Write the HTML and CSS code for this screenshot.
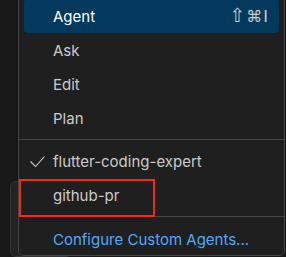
FILE: index.html
```html
<!DOCTYPE html>
<html lang="en">
<head>
    <meta charset="UTF-8">
    <meta name="viewport" content="width=device-width, initial-scale=1.0">
    <title>Agent Picker</title>
    <link rel="stylesheet" href="styles.css">
</head>
<body>
    <div class="backdrop-panel"></div>

    <div class="menu">
        <div class="item selected">
            <span class="icon"></span>
            <span class="label">Agent</span>
            <span class="keys"><span class="shift">⇧</span>⌘I</span>
        </div>
        <div class="item">
            <span class="icon"></span>
            <span class="label">Ask</span>
        </div>
        <div class="item">
            <span class="icon"></span>
            <span class="label">Edit</span>
        </div>
        <div class="item">
            <span class="icon"></span>
            <span class="label">Plan</span>
        </div>

        <div class="separator"></div>

        <div class="item">
            <span class="icon">
                <svg width="16" height="16" viewBox="0 0 16 16">
                    <path d="M1.5 8.5 L6.5 13.5 L15.5 3.5" fill="none" stroke="#cccccc" stroke-width="1.1"/>
                </svg>
            </span>
            <span class="label">flutter-coding-expert</span>
        </div>
        <div class="item">
            <span class="icon"></span>
            <span class="label">github-pr</span>
        </div>

        <div class="separator"></div>

        <div class="item last">
            <span class="icon"></span>
            <span class="label link">Configure Custom Agents...</span>
        </div>
    </div>

    <!-- annotation drawn over the screenshot -->
    <div class="highlight-box"></div>
</body>
</html>
```

FILE: styles.css
```css
body {
    margin: 0;
    padding: 0;
    background: #181818;
    font-family: Inter, "Noto Sans", sans-serif;
    font-size: 15px;
    color: #cccccc;
    overflow: hidden;
    position: relative;
    height: 257px;
}

.backdrop-panel {
    position: absolute;
    left: 10px;
    top: 181px;
    width: 60px;
    height: 74px;
    background: #232323;
    border: 1px solid #363636;
    border-radius: 6px;
}

.menu {
    position: relative;
    margin: -6px 0 0 18px;
    width: 255px;
    padding: 4px 5px 0 5px;
    background: #1f1f1f;
    border: 1px solid #454545;
    border-radius: 6px;
}

.item {
    display: flex;
    align-items: center;
    height: 34px;
    padding: 0 10px 0 5px;
    border-radius: 4px;
}

.item.last {
    height: 31px;
    padding-top: 3px;
}

.item.selected {
    background: #04395e;
    color: #ffffff;
}

.icon {
    width: 16px;
    height: 16px;
    margin-right: 8px;
    display: flex;
    align-items: center;
    justify-content: center;
}

.label {
    flex: 1;
}

.link {
    color: #4daafc;
}

.keys {
    font-family: "DejaVu Sans", sans-serif;
    font-size: 16px;
    color: #cccccc;
    letter-spacing: 1px;
}

.shift {
    font-size: 19px;
    line-height: 16px;
}

.separator {
    height: 1px;
    background: #454545;
    margin: 4px -5px 4px -5px;
}

.highlight-box {
    position: absolute;
    left: 19px;
    top: 179px;
    width: 132px;
    height: 34px;
    border: 2px solid #ee2a1d;
}
```
